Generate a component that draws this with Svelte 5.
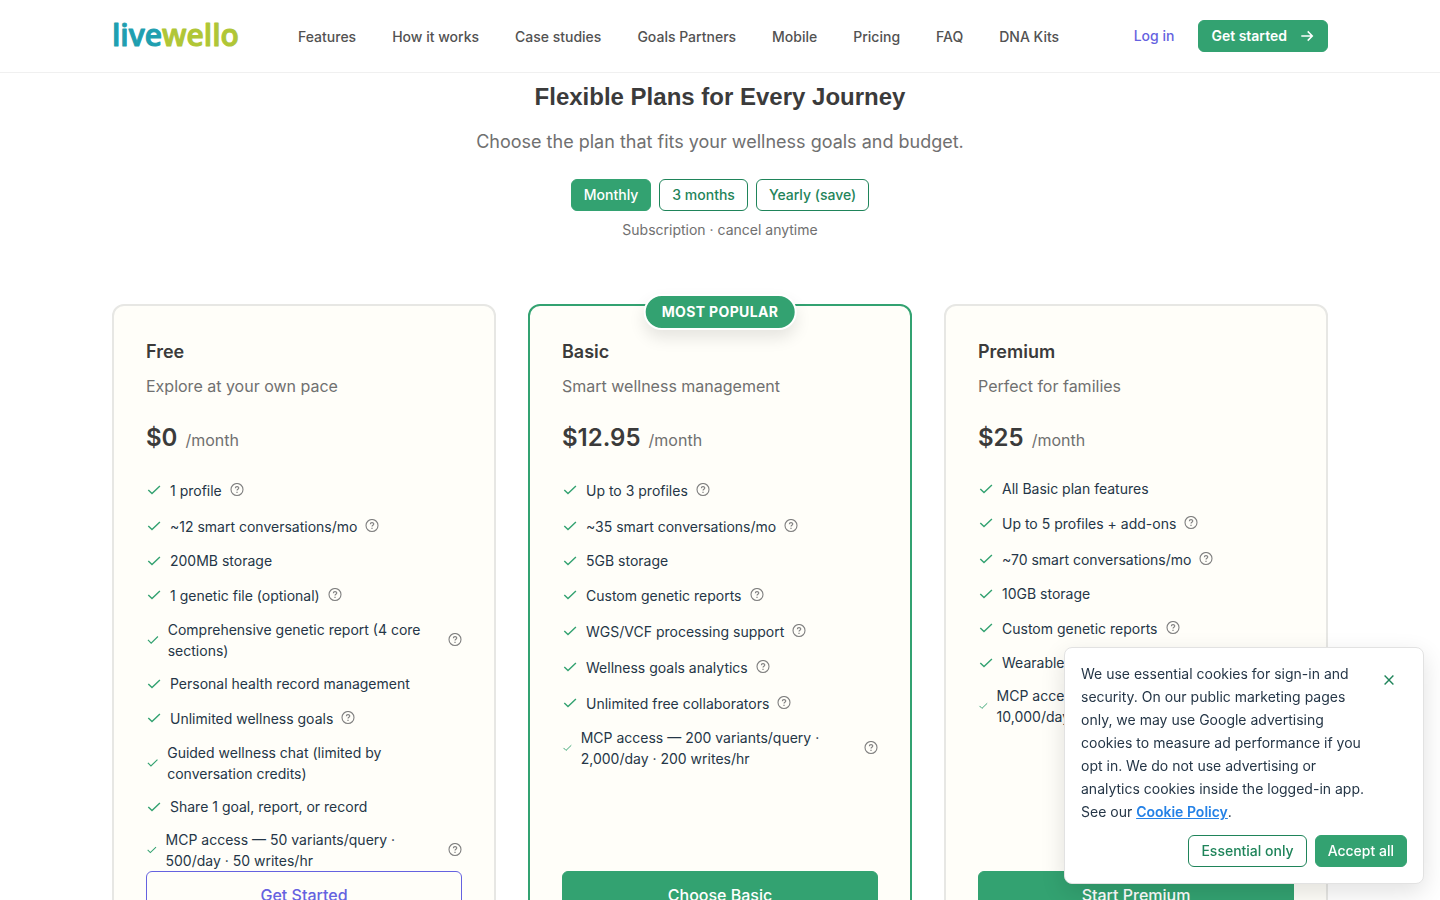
<script lang="ts">
	type Feature = { text: string; help?: boolean };
	type Plan = {
		name: string;
		tagline: string;
		price: string;
		cta: string;
		popular?: boolean;
		outline?: boolean;
		features: Feature[];
	};

	const links = [
		'Features',
		'How it works',
		'Case studies',
		'Goals Partners',
		'Mobile',
		'Pricing',
		'FAQ',
		'DNA Kits'
	];

	const periods = ['Monthly', '3 months', 'Yearly (save)'];
	let period = $state('Monthly');
	let showCookies = $state(true);

	const plans: Plan[] = [
		{
			name: 'Free',
			tagline: 'Explore at your own pace',
			price: '$0',
			cta: 'Get Started',
			outline: true,
			features: [
				{ text: '1 profile', help: true },
				{ text: '~12 smart conversations/mo', help: true },
				{ text: '200MB storage' },
				{ text: '1 genetic file (optional)', help: true },
				{ text: 'Comprehensive genetic report (4 core sections)', help: true },
				{ text: 'Personal health record management' },
				{ text: 'Unlimited wellness goals', help: true },
				{ text: 'Guided wellness chat (limited by conversation credits)' },
				{ text: 'Share 1 goal, report, or record' },
				{ text: 'MCP access — 50 variants/query · 500/day · 50 writes/hr', help: true }
			]
		},
		{
			name: 'Basic',
			tagline: 'Smart wellness management',
			price: '$12.95',
			cta: 'Choose Basic',
			popular: true,
			features: [
				{ text: 'Up to 3 profiles', help: true },
				{ text: '~35 smart conversations/mo', help: true },
				{ text: '5GB storage' },
				{ text: 'Custom genetic reports', help: true },
				{ text: 'WGS/VCF processing support', help: true },
				{ text: 'Wellness goals analytics', help: true },
				{ text: 'Unlimited free collaborators', help: true },
				{ text: 'MCP access — 200 variants/query · 2,000/day · 200 writes/hr', help: true }
			]
		},
		{
			name: 'Premium',
			tagline: 'Perfect for families',
			price: '$25',
			cta: 'Start Premium',
			features: [
				{ text: 'All Basic plan features' },
				{ text: 'Up to 5 profiles + add-ons', help: true },
				{ text: '~70 smart conversations/mo', help: true },
				{ text: '10GB storage' },
				{ text: 'Custom genetic reports', help: true },
				{ text: 'Wearable integrations' },
				{ text: 'MCP access — 500 variants/query · 10,000/day · 500 writes/hr', help: true }
			]
		}
	];
</script>

<div class="page">
	<header>
		<div class="bar">
			<a class="logo" href="#home" aria-label="livewello">
				<svg width="130" height="40" viewBox="0 0 130 40">
					<text x="0" y="30"><tspan class="live">live</tspan><tspan class="wello">wello</tspan></text>
				</svg>
			</a>
			<nav>
				{#each links as link}
					<a href="#{link}">{link}</a>
				{/each}
			</nav>
			<div class="account">
				<a class="login" href="#login">Log in</a>
				<button class="btn solid start">
					Get started
					<svg width="16" height="16" viewBox="0 0 16 16" fill="none" stroke="currentColor">
						<path d="M2.3 8h11M8.7 3.4 13.3 8l-4.6 4.6" stroke-width="1.5" />
					</svg>
				</button>
			</div>
		</div>
	</header>

	<main>
		<h1>Flexible Plans for Every Journey</h1>
		<p class="lead">Choose the plan that fits your wellness goals and budget.</p>
		<div class="periods">
			{#each periods as p}
				<button class="btn" class:solid={p === period} onclick={() => (period = p)}>{p}</button>
			{/each}
		</div>
		<p class="note">Subscription · cancel anytime</p>

		<div class="plans">
			{#each plans as plan}
				<section class="card" class:popular={plan.popular}>
					{#if plan.popular}
						<span class="badge">MOST POPULAR</span>
					{/if}
					<h2>{plan.name}</h2>
					<p class="tagline">{plan.tagline}</p>
					<p class="price"><strong>{plan.price}</strong><span>/month</span></p>
					<ul>
						{#each plan.features as feature}
							<li>
								<svg class="check" width="16" height="16" viewBox="0 0 16 16" fill="none" stroke="currentColor">
									<path d="M2.3 7.9 6 11.6 13.9 3.9" stroke-width="1.4" />
								</svg>
								<span>{feature.text}</span>
								{#if feature.help}
									<button class="help" aria-label="More about {feature.text}">
										<svg width="14" height="14" viewBox="0 0 14 14" fill="none" stroke="currentColor">
											<circle cx="7" cy="6.5" r="6" stroke-width="1.1" />
											<path d="M5.3 5.2c0-2.1 3.5-2.1 3.5-.1 0 1.2-1.8 1.2-1.8 2.5" stroke-width="1.1" />
											<path d="M7 8.8v1.1" stroke-width="1.2" />
										</svg>
									</button>
								{/if}
							</li>
						{/each}
					</ul>
					<button class="cta" class:outline={plan.outline}>{plan.cta}</button>
				</section>
			{/each}
		</div>
	</main>

	{#if showCookies}
		<aside class="cookies">
			<div class="message">
				<p>
					We use essential cookies for sign-in and security. On our public marketing pages only, we
					may use Google advertising cookies to measure ad performance if you opt in. We do not use
					advertising or analytics cookies inside the logged-in app. See our
					<a href="#cookies">Cookie Policy</a>.
				</p>
				<button class="close" aria-label="Close" onclick={() => (showCookies = false)}>
					<svg width="10" height="10" viewBox="0 0 10 10" fill="none" stroke="currentColor">
						<path d="m.6.6 8.8 8.8M9.4.6.6 9.4" stroke-width="1.4" />
					</svg>
				</button>
			</div>
			<div class="choices">
				<button class="btn" onclick={() => (showCookies = false)}>Essential only</button>
				<button class="btn solid" onclick={() => (showCookies = false)}>Accept all</button>
			</div>
		</aside>
	{/if}
</div>

<style>
	:global(body) {
		margin: 0;
		background: #fff;
	}

	.page {
		--green: #33a271;
		--dark-green: #1f845a;
		--ink: #3b3b3b;
		--muted: #707070;
		--navy: #253647;
		height: 100vh;
		overflow: hidden;
		font-family: Inter, 'Liberation Sans', sans-serif;
		font-size: 14px;
		color: var(--ink);
	}

	h1,
	h2,
	p,
	ul {
		margin: 0;
		padding: 0;
	}

	a {
		text-decoration: none;
	}

	button {
		font: inherit;
		cursor: pointer;
	}

	header {
		border-bottom: 1px solid #f0f0f0;
		background: #fff;
	}

	.bar {
		display: flex;
		align-items: center;
		max-width: 1216px;
		height: 72px;
		margin: 0 auto;
	}

	.logo {
		display: flex;
		font-family: 'Open Sans', sans-serif;
		font-size: 30px;
		font-weight: 600;
	}

	.logo svg {
		overflow: visible;
	}

	.logo text {
		stroke-width: 1px;
		stroke-linejoin: round;
	}

	.live {
		fill: #1f9fb0;
		stroke: #1f9fb0;
	}

	.wello {
		fill: #b0c636;
		stroke: #b0c636;
	}

	nav {
		display: flex;
		gap: 36px;
		margin-left: 56px;
		padding-top: 2px;
	}

	nav a {
		font-weight: 500;
		line-height: 20px;
		color: #525252;
	}

	.account {
		display: flex;
		align-items: center;
		gap: 24px;
		margin-left: auto;
	}

	.login {
		font-weight: 500;
		line-height: 20px;
		color: #6562e0;
	}

	.btn {
		display: flex;
		align-items: center;
		padding: 5px 12px;
		border: 1px solid var(--dark-green);
		border-radius: 6px;
		background: #fff;
		font-weight: 500;
		line-height: 20px;
		color: var(--dark-green);
	}

	.solid {
		border-color: var(--green);
		background: var(--green);
		color: #fff;
	}

	.start {
		gap: 12px;
		font-weight: 600;
	}

	main {
		max-width: 1216px;
		margin: 0 auto;
		padding-top: 8px;
		text-align: center;
	}

	h1 {
		font-family: 'Liberation Sans', Arial, sans-serif;
		font-size: 24px;
		font-weight: 700;
		line-height: 32px;
	}

	.lead {
		margin-top: 16px;
		font-size: 18px;
		line-height: 26px;
		color: var(--muted);
	}

	.periods {
		display: flex;
		justify-content: center;
		gap: 8px;
		margin-top: 24px;
	}

	.note {
		margin-top: 8px;
		line-height: 21px;
		color: var(--muted);
	}

	.plans {
		display: grid;
		grid-template-columns: repeat(3, 1fr);
		gap: 32px;
		margin-top: 64px;
		text-align: left;
	}

	.card {
		position: relative;
		display: flex;
		flex-direction: column;
		padding: 32px;
		border: 2px solid #e7e7e4;
		border-radius: 12px;
		background: #fffef9;
	}

	.popular {
		border-color: var(--green);
	}

	.badge {
		position: absolute;
		top: -12px;
		left: 50%;
		transform: translateX(-50%);
		padding: 5px 16px;
		border: 2px solid #fff;
		border-radius: 20px;
		background: var(--green);
		box-shadow: 0 8px 16px rgba(0, 0, 0, 0.1);
		font-weight: 700;
		letter-spacing: 0.025em;
		line-height: 22px;
		white-space: nowrap;
		color: #fff;
	}

	h2 {
		font-size: 18px;
		font-weight: 600;
		line-height: 28px;
	}

	.tagline {
		margin-top: 8px;
		font-size: 16px;
		line-height: 24px;
		color: var(--muted);
	}

	.price {
		display: flex;
		align-items: baseline;
		gap: 8px;
		margin: 24px 0;
		font-size: 16px;
		line-height: 24px;
		color: var(--muted);
	}

	.price strong {
		font-size: 24px;
		font-weight: 600;
		line-height: 32px;
		color: var(--ink);
	}

	ul {
		display: flex;
		flex-direction: column;
		gap: 12px;
		list-style: none;
	}

	li {
		display: flex;
		align-items: center;
		gap: 8px;
		line-height: 21px;
		color: var(--navy);
	}

	.check {
		color: var(--green);
	}

	.help {
		display: flex;
		flex-shrink: 0;
		align-items: center;
		height: 24px;
		padding: 0;
		border: 0;
		background: none;
		color: #808080;
	}

	.cta {
		height: 48px;
		margin-top: auto;
		border: 1px solid var(--green);
		border-radius: 6px;
		background: var(--green);
		font-size: 16px;
		font-weight: 500;
		color: #fff;
	}

	.outline {
		border-color: #6562e0;
		background: transparent;
		color: #6562e0;
	}

	.cookies {
		position: fixed;
		right: 16px;
		bottom: 16px;
		box-sizing: border-box;
		width: 360px;
		padding: 14px 16px 16px;
		border: 1px solid #e2e2e2;
		border-radius: 8px;
		background: #fff;
		box-shadow: 0 8px 24px rgba(0, 0, 0, 0.12);
		line-height: 23px;
		color: var(--navy);
	}

	.message {
		display: flex;
		align-items: flex-start;
		gap: 4px;
	}

	.message p {
		flex: 1;
	}

	.message a {
		font-weight: 600;
		text-decoration: underline;
		color: #2481e6;
	}

	.close {
		display: flex;
		align-items: center;
		justify-content: center;
		width: 36px;
		height: 36px;
		border: 0;
		background: none;
		color: var(--dark-green);
	}

	.choices {
		display: flex;
		justify-content: flex-end;
		gap: 8px;
		margin-top: 12px;
	}
</style>
